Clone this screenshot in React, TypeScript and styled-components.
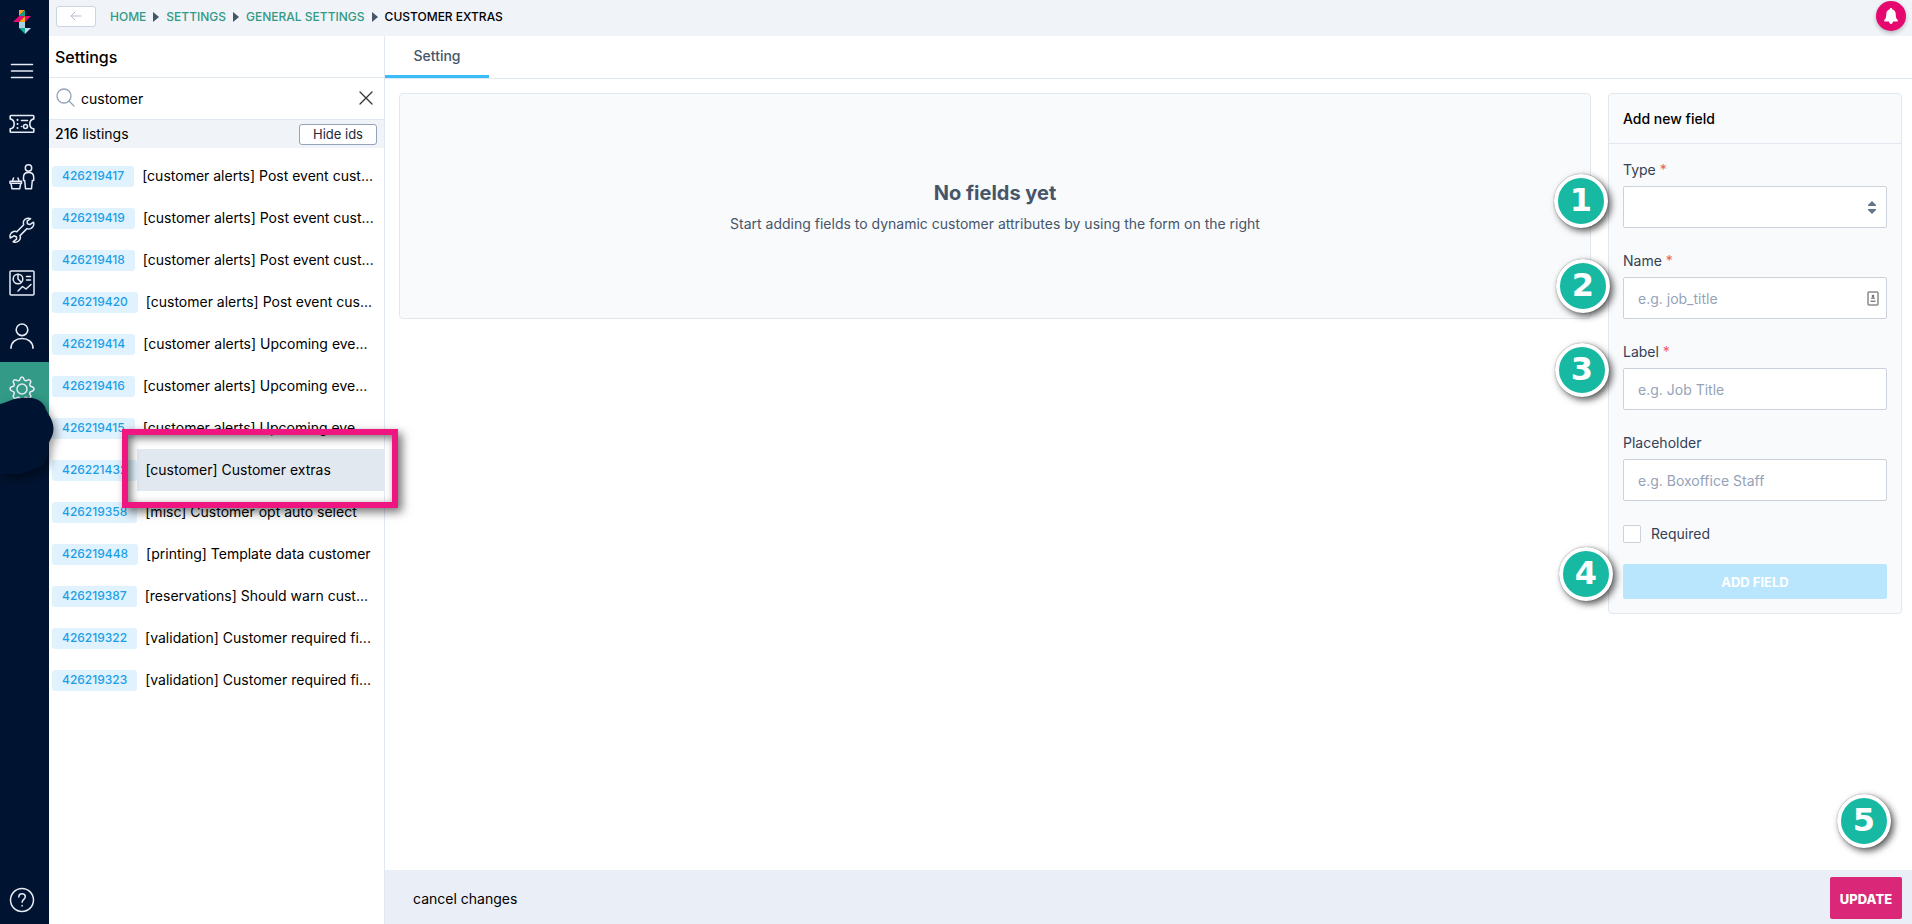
import React from "react";
import styled, { createGlobalStyle, css } from "styled-components";

const GlobalStyle = createGlobalStyle`
  *, *::before, *::after { box-sizing: border-box; }
  body {
    margin: 0;
    background: #fff;
    color: #000;
    font-family: Inter, "Liberation Sans", sans-serif;
    font-size: 14px;
    line-height: 20px;
  }
  button, input, select { font: inherit; color: inherit; margin: 0; }
  h1, h2, p, ul, ol { margin: 0; padding: 0; }
  ul, ol { list-style: none; }
  a { color: inherit; text-decoration: none; }
`;

const Shell = styled.div`
  display: flex;
  min-height: 100vh;
`;

const Sidebar = styled.nav`
  position: relative;
  z-index: 2;
  display: flex;
  flex-direction: column;
  flex: none;
  width: 49px;
  background: #001330;
  color: #e6ebf5;
`;

const Logo = styled.a`
  display: flex;
  align-items: center;
  justify-content: center;
  height: 44px;
  padding-right: 5px;
`;

const NavLink = styled.a<{ $active?: boolean }>`
  display: flex;
  align-items: center;
  justify-content: center;
  height: 53px;
  padding-right: 5px;
  background: ${(p) => (p.$active ? "#329a86" : "transparent")};
`;

const HelpLink = styled(NavLink)`
  margin-top: auto;
  height: 48px;
`;

const Icon = styled.svg.attrs({ fill: "none", stroke: "currentColor", strokeLinecap: "round", strokeLinejoin: "round", "aria-hidden": true })`
  flex: none;
  display: block;
`;

const InkBlob = styled.svg`
  position: absolute;
  top: 396px;
  left: 0;
  overflow: visible;
  filter: drop-shadow(3px 4px 4px rgba(0, 0, 0, 0.4));
`;

const Page = styled.div`
  display: flex;
  flex-direction: column;
  flex: 1;
  min-width: 0;
`;

const TopBar = styled.header`
  display: flex;
  align-items: center;
  height: 36px;
  padding: 0 6px 0 7px;
  background: #f0f3f8;
`;

const BackButton = styled.button`
  display: flex;
  align-items: center;
  justify-content: center;
  width: 40px;
  height: 21px;
  margin: 0 14px 4px 0;
  padding: 0;
  border: 1px solid #cbd5e1;
  border-radius: 3px;
  background: #fff;
  color: #b4bfce;
`;

const Crumbs = styled.ol`
  display: flex;
  align-items: center;
  flex: 1;
  margin-bottom: 3px;
  font-size: 12px;
  font-weight: 500;
  color: #329a86;
  text-transform: uppercase;
`;

const Crumb = styled.li`
  display: flex;
  align-items: center;

  & + &::before {
    content: "";
    margin: 0 7px;
    border-left: 6px solid #475569;
    border-top: 5px solid transparent;
    border-bottom: 5px solid transparent;
  }
  &:last-child { color: #000; }
`;

const BellButton = styled.button`
  display: flex;
  align-items: center;
  justify-content: center;
  width: 30px;
  height: 30px;
  margin-bottom: 4px;
  padding: 0;
  border: 0;
  border-radius: 50%;
  background: #e5096f;
  box-shadow: 0 2px 4px rgba(0, 0, 0, 0.25);
`;

const Columns = styled.div`
  display: flex;
  flex: 1;
`;

const SettingsPane = styled.aside`
  flex: none;
  width: 336px;
  border-right: 1px solid #e2e8f0;
`;

const PaneTitle = styled.h1`
  height: 42px;
  padding: 11px 6px 10px;
  border-bottom: 1px solid #e2e8f0;
  font-size: 16px;
  font-weight: 500;
`;

const SearchRow = styled.label`
  display: flex;
  align-items: center;
  height: 42px;
  padding: 0 11px 2px 7px;
  border-bottom: 1px solid #e2e8f0;
`;

const SearchInput = styled.input`
  flex: 1;
  min-width: 0;
  margin: 0 6px;
  padding: 2px 0 0;
  border: 0;
  outline: 0;
  background: transparent;
`;

const ClearButton = styled.button`
  padding: 0;
  border: 0;
  background: none;
  color: #333;
`;

const ListingBar = styled.div`
  display: flex;
  align-items: center;
  justify-content: space-between;
  height: 28px;
  padding: 0 7px 0 6px;
  background: #f0f3f8;

  strong { font-weight: 500; }
`;

const HideButton = styled.button`
  width: 78px;
  height: 21px;
  padding: 0;
  border: 1px solid #94a3b8;
  border-radius: 3px;
  background: #fff;
  color: #1e293b;
  font-size: 13px;
  line-height: 19px;
`;

const List = styled.ul`
  padding-top: 7px;
`;

const ListItem = styled.li`
  position: relative;
  display: flex;
  align-items: center;
  height: 42px;
  padding-left: 3px;
`;

const IdTag = styled.span`
  flex: none;
  height: 21px;
  padding: 0 10px;
  border-radius: 3px;
  background: #e0f2fe;
  color: #1d9fe6;
  font-size: 12px;
  font-weight: 500;
`;

const ItemLink = styled.a<{ $selected?: boolean }>`
  display: flex;
  align-items: center;
  flex: 1;
  min-width: 0;
  height: 42px;
  padding: 0 6px 0 8px;
  white-space: nowrap;
  background: ${(p) => (p.$selected ? "#e2e8f0" : "transparent")};
`;

const Highlight = styled.div`
  position: absolute;
  z-index: 3;
  top: -20px;
  left: 73px;
  width: 276px;
  height: 79px;
  border: 6px solid #ef1681;
  box-shadow: 4px 4px 9px rgba(0, 0, 0, 0.55), inset 3px 3px 9px rgba(0, 0, 0, 0.55);
  pointer-events: none;
`;

const Main = styled.main`
  display: flex;
  flex-direction: column;
  flex: 1;
  min-width: 0;
`;

const Tabs = styled.div`
  height: 43px;
  border-bottom: 1px solid #e2e8f0;
`;

const Tab = styled.button`
  height: 42px;
  width: 104px;
  padding: 0;
  border: 0;
  border-bottom: 3px solid #38bdf8;
  background: none;
  color: #475569;
  font-size: 14px;
  font-weight: 500;
`;

const Content = styled.div`
  display: flex;
  align-items: flex-start;
  flex: 1;
  gap: 17px;
  padding: 14px 10px 20px 14px;
`;

const panel = css`
  border: 1px solid #e2e8f0;
  border-radius: 4px;
  background: #f8fafc;
`;

const EmptyState = styled.section`
  ${panel}
  flex: 1;
  padding: 85px 20px 84px;
  color: #475569;
  text-align: center;

  h2 {
    margin-bottom: 7px;
    font-size: 20px;
    font-weight: 700;
    line-height: 28px;
  }
`;

const FormCard = styled.form`
  ${panel}
  flex: none;
  width: 294px;
  color: #334155;
`;

const FormTitle = styled.h2`
  padding: 15px 14px 14px;
  border-bottom: 1px solid #e2e8f0;
  color: #000;
  font-size: 14px;
  font-weight: 500;
`;

const FormBody = styled.div`
  padding: 16px 14px 14px;
`;

const Field = styled.div`
  position: relative;
  margin-bottom: 23px;

  label {
    display: block;
    margin-bottom: 6px;
  }
`;

const Asterisk = styled.span`
  color: #f25c5c;
`;

const Control = styled.div`
  position: relative;
`;

const control = css`
  display: block;
  width: 100%;
  height: 42px;
  padding: 0 14px;
  border: 1px solid #cbd2dc;
  border-radius: 2px;
  background: #fff;
  outline: 0;
`;

const Select = styled.select`
  ${control}
  appearance: none;
`;

const Input = styled.input`
  ${control}
  &::placeholder { color: #94a3b8; opacity: 1; }
`;

const ControlIcon = styled.svg`
  position: absolute;
  top: 14px;
  right: 8px;
  pointer-events: none;
`;

const CheckRow = styled.label`
  display: flex;
  align-items: center;
  gap: 10px;
  margin-bottom: 20px;
`;

const Checkbox = styled.input`
  appearance: none;
  width: 18px;
  height: 18px;
  border: 1px solid #cbd2dc;
  border-radius: 2px;
  background: #fff;
`;

const ButtonWrap = styled.div`
  position: relative;
`;

const AddButton = styled.button`
  display: block;
  width: 100%;
  height: 35px;
  border: 0;
  border-radius: 2px;
  background: #bae6fd;
  color: #fff;
  font-size: 13px;
  font-weight: 700;
`;

const Footer = styled.footer`
  display: flex;
  align-items: center;
  justify-content: space-between;
  height: 54px;
  padding: 2px 10px 0 28px;
  background: #eaeef7;
`;

const CancelButton = styled.button`
  padding: 2px 0 0;
  border: 0;
  background: none;
  font-size: 14px;
`;

const UpdateButton = styled.button`
  width: 72px;
  height: 42px;
  padding: 2px 0 0;
  border: 0;
  border-radius: 2px;
  background: #db2777;
  color: #fff;
  font-size: 13px;
  font-weight: 800;
`;

const Step = styled.span<{ $left: number; $top: number }>`
  position: absolute;
  z-index: 3;
  top: ${(p) => p.$top}px;
  left: ${(p) => p.$left}px;
  width: 54px;
  height: 54px;
  border: 4px solid #fff;
  border-radius: 50%;
  background: #17b9a2;
  box-shadow: 0 0 1px rgba(0, 0, 0, 0.6), 3px 3px 7px rgba(0, 0, 0, 0.65);
  color: #fff;
  font: 700 32px/45px "DejaVu Sans", sans-serif;
  text-align: center;
`;

const NAV = [
  {
    label: "Menu",
    icon: (
      <Icon width="24" height="24" viewBox="0 0 24 24" strokeWidth="1.6">
        <path d="M1.5 5.5h21M1.5 12h21M1.5 18.5h21" />
      </Icon>
    ),
  },
  {
    label: "Tickets",
    icon: (
      <Icon width="26" height="20" viewBox="0 0 26 20" strokeWidth="1.6">
        <path d="M2 1.5h22c.5 0 .8.3.8.8v2.6c-2.700.6-4 2.700-4 5s1.300 4.500 4 5v2.600c0 .5-.3.8-.8.8H2c-.5 0-.8-.3-.8-.8v-2.600c2.700-.5 4-2.700 4-5s-1.300-4.400-4-5V2.300c0-.5.300-.8.800-.8z" />
        <path d="M8.500 5.800v.1M8.500 9.900v.1M8.500 14v.1" strokeWidth="2" />
        <path d="M12.500 6.500h6M12.500 12.500h.1" />
        <circle cx="16.500" cy="12.500" r="2" />
      </Icon>
    ),
  },
  {
    label: "Customers",
    icon: (
      <Icon width="26" height="26" viewBox="0 0 26 26" strokeWidth="1.5">
        <circle cx="19.500" cy="4" r="3.200" />
        <path d="M16.500 24.800l-.8-8.300h-1.200v-3.300c0-2.900 2-4.700 5-4.700s5.200 1.800 5.200 4.700v3.300h-1.400l-.8 8.300z" />
        <path d="M1 17.300h11.500v2H1zM2 19.500l1 5.300h7.700l1-5.300M3.500 17l1-3M10 17l-1-3" />
      </Icon>
    ),
  },
  {
    label: "Tools",
    icon: (
      <Icon width="26" height="26" viewBox="0 0 26 26" strokeWidth="1.5">
        <path d="M24.500 5.200l-3.700 2.400-2.400-.9-.3-2.500 3.500-2.500c-2.600-1.200-5.800-.3-6.900 2.300-.5 1.300-.4 2.600 0 3.800l-6.900 6.900c-1.200-.4-2.500-.5-3.800 0-2.600 1.100-3.500 4-2.700 6.300l3.600-2.200 2.400.9.300 2.500-3.400 2.500c2.600 1.100 5.700.1 6.800-2.400.5-1.200.4-2.600 0-3.700l7-7c1.100.4 2.400.5 3.700 0 2.500-1.100 3.600-3.900 2.800-6.400z" />
      </Icon>
    ),
  },
  {
    label: "Reports",
    icon: (
      <Icon width="26" height="26" viewBox="0 0 26 26" strokeWidth="1.5">
        <rect x="1" y="1" width="24" height="24" rx="1" />
        <circle cx="9" cy="9" r="4.800" />
        <path d="M9 4.500V9l3.300 3.300M17.500 6.500h4M17.500 10h4M9 21l4.500-4.500 3.500 2.500 5-4.500" />
      </Icon>
    ),
  },
  {
    label: "Profile",
    icon: (
      <Icon width="26" height="26" viewBox="0 0 26 26" strokeWidth="1.600">
        <circle cx="13" cy="6.800" r="5.800" />
        <path d="M2 25.200c0-6 4.800-9.700 11-9.700s11 3.700 11 9.700" />
      </Icon>
    ),
  },
  {
    label: "Settings",
    active: true,
    icon: (
      <Icon width="26" height="26" viewBox="0 0 26 26" strokeWidth="1.500">
        <circle cx="13" cy="13" r="5" />
        <path d="M11 3.200c.3-1.400.9-2.200 2-2.200s1.700.8 2 2.200c.4 1.500 1.700 2 3 1.200 1.400-.9 2.400-.9 3.200-.1s.8 1.900-.1 3.200c-.8 1.300-.3 2.700 1.200 3.100 1.700.4 2.700 1.200 2.700 2.400s-1 2-2.700 2.400c-1.500.4-2 1.800-1.200 3.100.9 1.300.9 2.400.1 3.200s-1.800.8-3.200-.1c-1.300-.8-2.600-.3-3 1.200-.3 1.400-.9 2.200-2 2.200s-1.700-.8-2-2.200c-.4-1.500-1.700-2-3-1.200-1.400.9-2.400.9-3.200.1s-.8-1.900.1-3.200c.8-1.300.3-2.700-1.200-3.100C2 14.800 1 14 1 12.800s1-1.800 2.700-2.200c1.500-.4 2-1.800 1.200-3.100-.9-1.300-.9-2.400-.1-3.200s1.800-.8 3.200.1c1.300.8 2.600.3 3-1.200z" />
      </Icon>
    ),
  },
];

const SETTINGS = [
  ["426219417", "[customer alerts] Post event cust..."],
  ["426219419", "[customer alerts] Post event cust..."],
  ["426219418", "[customer alerts] Post event cust..."],
  ["426219420", "[customer alerts] Post event cus..."],
  ["426219414", "[customer alerts] Upcoming eve..."],
  ["426219416", "[customer alerts] Upcoming eve..."],
  ["426219415", "[customer alerts] Upcoming eve..."],
  ["426221432", "[customer] Customer extras"],
  ["426219358", "[misc] Customer opt auto select"],
  ["426219448", "[printing] Template data customer"],
  ["426219387", "[reservations] Should warn cust..."],
  ["426219322", "[validation] Customer required fi..."],
  ["426219323", "[validation] Customer required fi..."],
];

const SELECTED_ID = "426221432";

export default function App() {
  return (
    <Shell>
      <GlobalStyle />
      <Sidebar aria-label="Main">
        <Logo href="#" aria-label="Home">
          <svg width="18" height="24" viewBox="0 0 18 24" aria-hidden="true">
            <path d="M6 0h6L6 6z" fill="#f9a11b" />
            <path d="M12 0v6H6z" fill="#119f8f" />
            <path d="M0 12l6-6v6z" fill="#e5096f" />
            <path d="M6 6h6l-6 6z" fill="#e5096f" />
            <path d="M12 6v6H6z" fill="#f9a11b" />
            <path d="M12 6h6l-6 6z" fill="#e5096f" />
            <path d="M6 12h6v6H6z" fill="#a9cfe3" />
            <path d="M6 18h6v6z" fill="#14ab96" />
            <path d="M12 18h6l-6 6z" fill="#b5d9e8" />
          </svg>
        </Logo>
        {NAV.map((item) => (
          <NavLink key={item.label} href="#" aria-label={item.label} $active={item.active}>
            {item.icon}
          </NavLink>
        ))}
        <HelpLink href="#" aria-label="Help">
          <Icon width="26" height="26" viewBox="0 0 26 26" strokeWidth="1.500">
            <circle cx="13" cy="13" r="11.500" />
            <path d="M9.800 10c0-2 1.300-3.300 3.200-3.300s3.300 1.200 3.300 3c0 2.500-3.200 2.800-3.200 5.600M13.100 18.600v.3" />
          </Icon>
        </HelpLink>
        <InkBlob width="54" height="80" viewBox="0 0 54 80" aria-hidden="true">
          <path d="M0 8C8 6 14 2 22 2c10-.500 18 0 23 9 1 5 8 11 8.500 21 0 9-4 11-5 17-.500 10-1 17-8 22L20 78H0z" fill="#001330" />
        </InkBlob>
      </Sidebar>

      <Page>
        <TopBar>
          <BackButton type="button" aria-label="Back">
            <Icon width="12" height="10" viewBox="0 0 12 10" strokeWidth="1">
              <path d="M11 5H1M5 1L1 5l4 4" />
            </Icon>
          </BackButton>
          <Crumbs>
            <Crumb><a href="#">Home</a></Crumb>
            <Crumb><a href="#">Settings</a></Crumb>
            <Crumb><a href="#">General settings</a></Crumb>
            <Crumb aria-current="page">Customer extras</Crumb>
          </Crumbs>
          <BellButton type="button" aria-label="Notifications">
            <svg width="14" height="16" viewBox="0 0 14 16" fill="#fff" aria-hidden="true">
              <path d="M7 0c.700 0 1.200.500 1.200 1.200C10.500 1.800 11.700 3.800 11.700 6c0 3.200.600 4.800 2 6 .500.600.200 1.500-.700 1.500H9c-.200 1.600-.900 2.500-2 2.500s-1.800-.900-2-2.500H1c-.900 0-1.200-.900-.700-1.500 1.400-1.200 2-2.800 2-6 0-2.200 1.200-4.200 3.500-4.800C5.800.500 6.300 0 7 0z" />
            </svg>
          </BellButton>
        </TopBar>

        <Columns>
          <SettingsPane>
            <PaneTitle>Settings</PaneTitle>
            <SearchRow>
              <Icon width="19" height="19" viewBox="0 0 19 19" strokeWidth="1.300" color="#94a3b8">
                <circle cx="8" cy="8" r="7" />
                <path d="M13 13l5 5" />
              </Icon>
              <SearchInput aria-label="Search settings" defaultValue="customer" />
              <ClearButton type="button" aria-label="Clear search">
                <Icon width="14" height="14" viewBox="0 0 14 14" strokeWidth="1.300">
                  <path d="M1 1l12 12M13 1L1 13" />
                </Icon>
              </ClearButton>
            </SearchRow>
            <ListingBar>
              <span><strong>216</strong> listings</span>
              <HideButton type="button">Hide ids</HideButton>
            </ListingBar>
            <List>
              {SETTINGS.map(([id, name]) => (
                <ListItem key={id}>
                  <IdTag>{id}</IdTag>
                  <ItemLink href="#" $selected={id === SELECTED_ID}>{name}</ItemLink>
                  {id === SELECTED_ID && <Highlight />}
                </ListItem>
              ))}
            </List>
          </SettingsPane>

          <Main>
            <Tabs role="tablist">
              <Tab type="button" role="tab" aria-selected="true">Setting</Tab>
            </Tabs>
            <Content>
              <EmptyState>
                <h2>No fields yet</h2>
                <p>Start adding fields to dynamic customer attributes by using the form on the right</p>
              </EmptyState>
              <FormCard onSubmit={(e) => e.preventDefault()}>
                <FormTitle>Add new field</FormTitle>
                <FormBody>
                  <Field>
                    <label htmlFor="type">Type <Asterisk>*</Asterisk></label>
                    <Control>
                      <Select id="type" defaultValue=""><option value="" /></Select>
                      <ControlIcon width="14" height="14" viewBox="0 0 14 14" fill="#64748b" aria-hidden="true">
                        <path d="M7 1l4 4v1H3V5zM3 9h8v1l-4 4-4-4z" />
                      </ControlIcon>
                    </Control>
                    <Step $left={-69} $top={14}>1</Step>
                  </Field>
                  <Field>
                    <label htmlFor="name">Name <Asterisk>*</Asterisk></label>
                    <Control>
                      <Input id="name" placeholder="e.g. job_title" />
                      <ControlIcon width="12" height="15" viewBox="0 0 12 15" aria-hidden="true">
                        <rect x="1" y="1" width="10" height="13" rx="1" fill="#fff" stroke="#8a8a8a" strokeWidth="1.500" />
                        <circle cx="6" cy="5" r="1.300" fill="#777" />
                        <path d="M4 8c0-1.300.800-2 2-2s2 .700 2 2zM3.500 9.500h5v1.500h-5z" fill="#888" />
                      </ControlIcon>
                    </Control>
                    <Step $left={-67} $top={8}>2</Step>
                  </Field>
                  <Field>
                    <label htmlFor="label">Label <Asterisk>*</Asterisk></label>
                    <Input id="label" placeholder="e.g. Job Title" />
                    <Step $left={-68} $top={1}>3</Step>
                  </Field>
                  <Field>
                    <label htmlFor="placeholder">Placeholder</label>
                    <Input id="placeholder" placeholder="e.g. Boxoffice Staff" />
                  </Field>
                  <CheckRow>
                    <Checkbox type="checkbox" />
                    Required
                  </CheckRow>
                  <ButtonWrap>
                    <AddButton type="submit">ADD FIELD</AddButton>
                    <Step $left={-64} $top={-17}>4</Step>
                  </ButtonWrap>
                </FormBody>
              </FormCard>
            </Content>
            <Footer>
              <CancelButton type="button">cancel changes</CancelButton>
              <ButtonWrap>
                <UpdateButton type="button">UPDATE</UpdateButton>
                <Step $left={7} $top={-83}>5</Step>
              </ButtonWrap>
            </Footer>
          </Main>
        </Columns>
      </Page>
    </Shell>
  );
}
